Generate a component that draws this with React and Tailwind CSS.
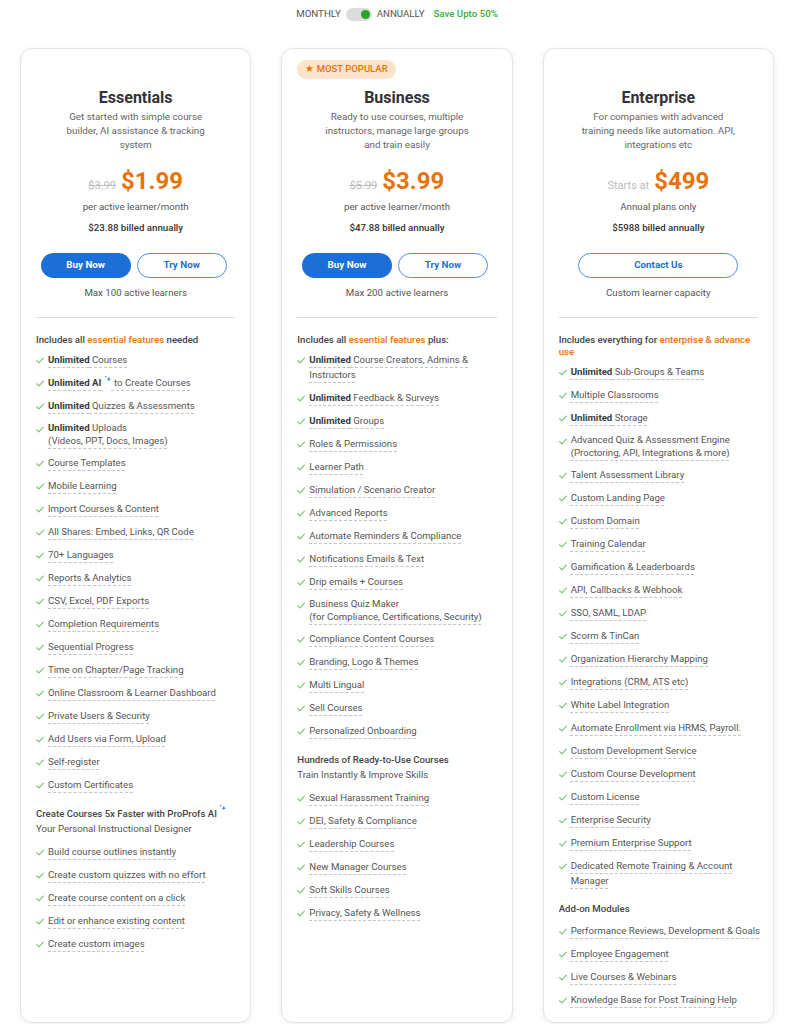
import React from "react";

const ORANGE = "text-[#e8730c]";

function Check() {
  return (
    <svg width="8" height="7" viewBox="0 0 8 7" className="mt-[4px] shrink-0">
      <path d="M0.6 3.6 L2.9 5.8 L7.4 1.1" fill="none" stroke="#74c374" strokeWidth="1.1" strokeLinecap="round" strokeLinejoin="round" />
    </svg>
  );
}

function Sparkle({ className = "" }) {
  return (
    <svg width="8" height="8" viewBox="0 0 10 10" className={className}>
      <path d="M6 2.2 L6.8 4.4 L9 5.2 L6.8 6 L6 8.2 L5.2 6 L3 5.2 L5.2 4.4 Z" fill="#2f7fe6" />
      <path d="M2.2 0.6 L2.6 1.6 L3.6 2 L2.6 2.4 L2.2 3.4 L1.8 2.4 L0.8 2 L1.8 1.6 Z" fill="#2f7fe6" />
    </svg>
  );
}

const U = "underline decoration-dashed decoration-[#c4c4c4] decoration-1 underline-offset-[4px]";

function B({ children }) {
  return <span className="font-bold text-[#3a3a3a]">{children}</span>;
}

function Item({ lines, mode }) {
  const multi = lines.length > 1;
  const leading = multi && mode === "last" ? "leading-[12.5px]" : multi ? "leading-[14.5px]" : "leading-[14px]";
  return (
    <li className="flex items-start gap-[4px]">
      <Check />
      <div className={`whitespace-nowrap ${leading}`}>
        {lines.map((ln, i) => {
          const underline = mode === "last" ? i === lines.length - 1 : true;
          return (
            <React.Fragment key={i}>
              <span className={underline ? U : ""}>{ln}</span>
              {i < lines.length - 1 && <br />}
            </React.Fragment>
          );
        })}
      </div>
    </li>
  );
}

function Section({ title, sub, items, first }) {
  return (
    <div className={first ? "" : sub ? "mt-[15px]" : "mt-[14px]"}>
      {title && (
        <div className="text-[#444]">
          <div className="font-medium leading-[14px]">{title}</div>
          {sub && <div className="leading-[15px] text-[#555]">{sub}</div>}
        </div>
      )}
      <ul className={`flex flex-col gap-[9px] ${title ? (sub ? "mt-[9px]" : "mt-[8px]") : ""}`}>
        {items.map((it, i) => (
          <Item key={i} lines={Array.isArray(it) ? it : it.l || [it]} mode={it.m || "all"} />
        ))}
      </ul>
    </div>
  );
}

const SP = "relative -top-[3px] inline-block align-baseline";

const plans = [
  {
    name: "Essentials",
    desc: "Get started with simple course builder, AI assistance & tracking system",
    old: "$3.99",
    price: "$1.99",
    per: "per active learner/month",
    billed: "$23.88 billed annually",
    buttons: "two",
    note: "Max 100 active learners",
    heading: (
      <>
        Includes all <span className={ORANGE}>essential features</span> needed
      </>
    ),
    sections: [
      {
        items: [
          <><B>Unlimited</B> Courses</>,
          <><B>Unlimited AI</B> <Sparkle className={SP} /> to Create Courses</>,
          <><B>Unlimited</B> Quizzes &amp; Assessments</>,
          { l: [<><B>Unlimited</B> Uploads</>, "(Videos, PPT, Docs, Images)"], m: "last" },
          "Course Templates",
          "Mobile Learning",
          "Import Courses & Content",
          "All Shares: Embed, Links, QR Code",
          "70+ Languages",
          "Reports & Analytics",
          "CSV, Excel, PDF Exports",
          "Completion Requirements",
          "Sequential Progress",
          "Time on Chapter/Page Tracking",
          "Online Classroom & Learner Dashboard",
          "Private Users & Security",
          "Add Users via Form, Upload",
          "Self-register",
          "Custom Certificates",
        ],
      },
      {
        title: (
          <>
            Create Courses 5x Faster with ProProfs AI <Sparkle className="relative -top-[5px] inline-block align-baseline" />
          </>
        ),
        sub: "Your Personal Instructional Designer",
        items: [
          "Build course outlines instantly",
          "Create custom quizzes with no effort",
          "Create course content on a click",
          "Edit or enhance existing content",
          "Create custom images",
        ],
      },
    ],
  },
  {
    name: "Business",
    popular: true,
    desc: "Ready to use courses, multiple instructors, manage large groups and train easily",
    old: "$5.99",
    price: "$3.99",
    per: "per active learner/month",
    billed: "$47.88 billed annually",
    buttons: "two",
    note: "Max 200 active learners",
    heading: (
      <>
        Includes all <span className={ORANGE}>essential features</span> plus:
      </>
    ),
    sections: [
      {
        items: [
          { l: [<><B>Unlimited</B> Course Creators, Admins &amp;</>, "Instructors"], m: "all" },
          <><B>Unlimited</B> Feedback &amp; Surveys</>,
          <><B>Unlimited</B> Groups</>,
          "Roles & Permissions",
          "Learner Path",
          "Simulation / Scenario Creator",
          "Advanced Reports",
          "Automate Reminders & Compliance",
          "Notifications Emails & Text",
          "Drip emails + Courses",
          { l: ["Business Quiz Maker", "(for Compliance, Certifications, Security)"], m: "last" },
          "Compliance Content Courses",
          "Branding, Logo & Themes",
          "Multi Lingual",
          "Sell Courses",
          "Personalized Onboarding",
        ],
      },
      {
        title: "Hundreds of Ready-to-Use Courses",
        sub: "Train Instantly & Improve Skills",
        items: [
          "Sexual Harassment Training",
          "DEI, Safety & Compliance",
          "Leadership Courses",
          "New Manager Courses",
          "Soft Skills Courses",
          "Privacy, Safety & Wellness",
        ],
      },
    ],
  },
  {
    name: "Enterprise",
    desc: "For companies with advanced training needs like automation. API, integrations etc",
    startsAt: true,
    price: "$499",
    per: "Annual plans only",
    billed: "$5988 billed annually",
    buttons: "contact",
    note: "Custom learner capacity",
    heading: (
      <>
        <span>Includes everything for </span>
        <span className={ORANGE}>enterprise &amp; advance</span>
        <br />
        <span className={ORANGE}>use</span>
      </>
    ),
    sections: [
      {
        items: [
          <><B>Unlimited</B> Sub-Groups &amp; Teams</>,
          "Multiple Classrooms",
          <><B>Unlimited</B> Storage</>,
          { l: ["Advanced Quiz & Assessment Engine", "(Proctoring, API, Integrations & more)"], m: "last" },
          "Talent Assessment Library",
          "Custom Landing Page",
          "Custom Domain",
          "Training Calendar",
          "Gamification & Leaderboards",
          "API, Callbacks & Webhook",
          "SSO, SAML, LDAP",
          "Scorm & TinCan",
          "Organization Hierarchy Mapping",
          "Integrations (CRM, ATS etc)",
          "White Label Integration",
          "Automate Enrollment via HRMS, Payroll.",
          "Custom Development Service",
          "Custom Course Development",
          "Custom License",
          "Enterprise Security",
          "Premium Enterprise Support",
          { l: ["Dedicated Remote Training & Account", "Manager"], m: "all" },
        ],
      },
      {
        title: "Add-on Modules",
        items: [
          "Performance Reviews, Development & Goals",
          "Employee Engagement",
          "Live Courses & Webinars",
          "Knowledge Base for Post Training Help",
        ],
      },
    ],
  },
];

function Card({ p }) {
  return (
    <div className="relative flex flex-col rounded-[12px] border border-[#e4e4e4] bg-white px-[15px] pt-[39px] pb-[15px] shadow-[0_1px_6px_rgba(0,0,0,0.07)]">
      {p.popular && (
        <div className="absolute left-[15px] top-[11px] flex h-[19px] items-center rounded-full bg-[#fde3ca] px-[8px] text-[9.5px] font-medium text-[#e8730c]">
          ★ MOST POPULAR
        </div>
      )}
      <div className="text-center text-[16px] font-bold leading-[20px] text-[#333]">{p.name}</div>
      <div className="mx-auto mt-[2px] w-[158px] text-center text-[9.8px] leading-[14px] text-[#666]">{p.desc}</div>
      <div className="mt-[15px] flex items-baseline justify-center gap-[5px]">
        {p.startsAt ? (
          <span className="text-[11px] text-[#bcbcbc]">Starts at</span>
        ) : (
          <span className="text-[11px] text-[#bcbcbc] line-through">{p.old}</span>
        )}
        <span className={`text-[24px] font-bold leading-[28px] ${ORANGE}`}>{p.price}</span>
      </div>
      <div className="mt-[5px] text-center text-[9.7px] leading-[14px] text-[#555]">{p.per}</div>
      <div className="mt-[7px] text-center text-[9.7px] font-medium leading-[14px] text-[#333]">{p.billed}</div>
      {p.buttons === "two" ? (
        <div className="mt-[18px] flex justify-center gap-[6px] pr-[4px]">
          <div className="flex h-[25px] w-[90px] items-center justify-center rounded-full bg-[#1b6fd6] text-[9.8px] font-bold text-white">
            Buy Now
          </div>
          <div className="flex h-[25px] w-[90px] items-center justify-center rounded-full border border-[#4b8fe2] bg-white text-[9.8px] font-bold text-[#1b6fd6]">
            Try Now
          </div>
        </div>
      ) : (
        <div className="mt-[18px] flex justify-center">
          <div className="flex h-[25px] w-[160px] items-center justify-center rounded-full border border-[#4b8fe2] bg-white text-[9.8px] font-bold text-[#1b6fd6]">
            Contact Us
          </div>
        </div>
      )}
      <div className="mt-[8px] text-center text-[9.7px] leading-[14px] text-[#555]">{p.note}</div>
      <div className="mt-[17px] border-t border-[#dcdcdc]" />
      <div className="mt-[16px] text-[9.65px] font-medium leading-[12px] text-[#444]">{p.heading}</div>
      <div className="mt-[7px] text-[9.65px] text-[#555]">
        {p.sections.map((s, i) => (
          <Section key={i} first={i === 0} {...s} />
        ))}
      </div>
    </div>
  );
}

export default function App() {
  return (
    <div className="min-h-[1024px] w-[794px] bg-white pb-[3px] font-['Roboto',sans-serif]">
      <div className="flex h-[28px] items-center justify-center text-[9.7px]">
        <span className="text-[#555]">MONTHLY</span>
        <div className="ml-[5px] flex h-[13px] w-[26px] items-center justify-end rounded-full bg-[#dcdcdc] pr-[2px]">
          <div className="h-[9px] w-[9px] rounded-full bg-[#2aa52a]" />
        </div>
        <span className="ml-[5px] text-[#555]">ANNUALLY</span>
        <span className="ml-[9px] font-medium text-[#3bab36]">Save Upto 50%</span>
      </div>
      <div className="mt-[20px] grid grid-cols-3 gap-[30px] px-[20px]">
        {plans.map((p) => (
          <Card key={p.name} p={p} />
        ))}
      </div>
    </div>
  );
}
